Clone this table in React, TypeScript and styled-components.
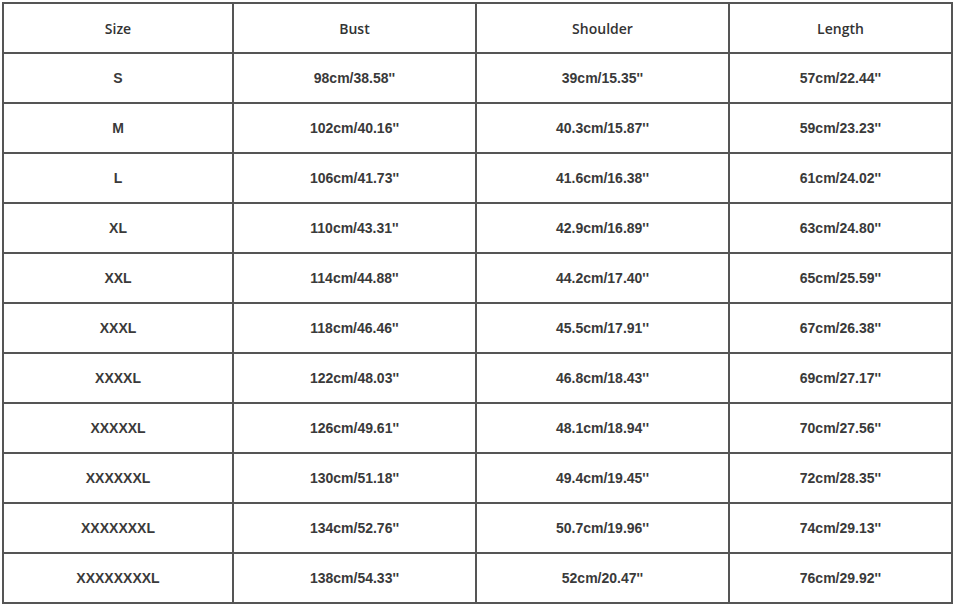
import styled, { createGlobalStyle } from "styled-components";

const GlobalStyle = createGlobalStyle`
  html, body {
    margin: 0;
    padding: 0;
    background: #fff;
  }
  body {
    font-family: "Liberation Sans", Arial, sans-serif;
  }
`;

const Page = styled.div`
  padding: 2px 0 0 2px;
`;

const Table = styled.table`
  border-collapse: separate;
  border-spacing: 0;
  border-top: 2px solid #555;
  border-left: 2px solid #555;
  table-layout: fixed;
`;

const Cell = styled.td<{ $w: number }>`
  width: ${(p) => p.$w}px;
  height: 48px;
  padding: 0;
  border-right: 2px solid #555;
  border-bottom: 2px solid #555;
  text-align: center;
  vertical-align: middle;
  font-size: 14px;
  font-weight: 700;
  color: #3a3a3a;
`;

const HeadCell = styled(Cell).attrs({ as: "th" })`
  font-family: "Open Sans", "Liberation Sans", sans-serif;
  font-weight: 600;
  font-size: 14px;
  color: #333;
`;

const widths = [228, 241, 251, 221];
const headers = ["Size", "Bust", "Shoulder", "Length"];

const rows: string[][] = [
  ["S", "98cm/38.58''", "39cm/15.35''", "57cm/22.44''"],
  ["M", "102cm/40.16''", "40.3cm/15.87''", "59cm/23.23''"],
  ["L", "106cm/41.73''", "41.6cm/16.38''", "61cm/24.02''"],
  ["XL", "110cm/43.31''", "42.9cm/16.89''", "63cm/24.80''"],
  ["XXL", "114cm/44.88''", "44.2cm/17.40''", "65cm/25.59''"],
  ["XXXL", "118cm/46.46''", "45.5cm/17.91''", "67cm/26.38''"],
  ["XXXXL", "122cm/48.03''", "46.8cm/18.43''", "69cm/27.17''"],
  ["XXXXXL", "126cm/49.61''", "48.1cm/18.94''", "70cm/27.56''"],
  ["XXXXXXL", "130cm/51.18''", "49.4cm/19.45''", "72cm/28.35''"],
  ["XXXXXXXL", "134cm/52.76''", "50.7cm/19.96''", "74cm/29.13''"],
  ["XXXXXXXXL", "138cm/54.33''", "52cm/20.47''", "76cm/29.92''"],
];

export default function App() {
  return (
    <Page>
      <GlobalStyle />
      <Table>
        <thead>
          <tr>
            {headers.map((h, i) => (
              <HeadCell key={h} $w={widths[i]}>
                {h}
              </HeadCell>
            ))}
          </tr>
        </thead>
        <tbody>
          {rows.map((r) => (
            <tr key={r[0]}>
              {r.map((v, i) => (
                <Cell key={i} $w={widths[i]}>
                  {v}
                </Cell>
              ))}
            </tr>
          ))}
        </tbody>
      </Table>
    </Page>
  );
}
